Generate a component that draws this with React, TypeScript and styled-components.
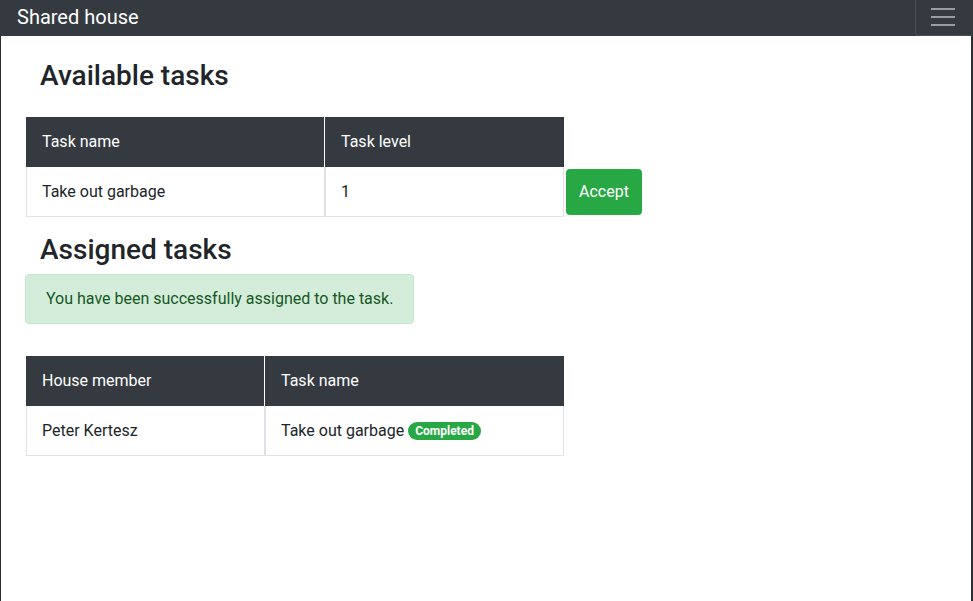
import React from "react";
import styled, { createGlobalStyle } from "styled-components";

const Global = createGlobalStyle`
  html, body { margin: 0; padding: 0; background: #fff; }
  body { font-family: Roboto, "Liberation Sans", sans-serif; color: #212529; font-size: 16px; }
  * { box-sizing: border-box; }
`;

const Page = styled.div`
  width: 973px;
  height: 601px;
  display: flex;
  flex-direction: column;
  overflow: hidden;
`;

const Navbar = styled.nav`
  height: 36px;
  background: #343a40;
  display: flex;
  align-items: center;
  justify-content: space-between;
  padding-left: 17px;
  flex-shrink: 0;
`;

const Brand = styled.span`
  color: #fff;
  font-size: 20px;
  line-height: 24px;
  margin-top: -3px;
`;

const Toggler = styled.button`
  width: 57px;
  height: 36px;
  margin-right: 1px;
  background: transparent;
  border: 1px solid rgba(255, 255, 255, 0.1);
  border-top: none;
  border-right: none;
  border-radius: 0 0 0 4px;
  display: flex;
  flex-direction: column;
  align-items: center;
  justify-content: center;
  gap: 6px;
  padding: 0 2px 2px 0;
`;

const Bar = styled.span`
  display: block;
  width: 24px;
  height: 2px;
  background: rgba(255, 255, 255, 0.5);
`;

const Content = styled.main`
  flex: 1;
  border-left: 1px solid #2b2f33;
  border-right: 2px solid #2b2f33;
  padding: 23px 0 0 24px;
`;

const Heading = styled.h2<{ $top: number; $bottom: number }>`
  font-size: 28px;
  font-weight: 500;
  line-height: 34px;
  margin: ${(p) => p.$top}px 0 ${(p) => p.$bottom}px 15px;
  color: #212529;
`;

const Table = styled.table`
  border-collapse: separate;
  border-spacing: 0;
  margin-left: 1px;
`;

const Th = styled.th<{ $w: number; $divider?: boolean }>`
  width: ${(p) => p.$w}px;
  height: 50px;
  background: #343a40;
  color: #fff;
  font-weight: 400;
  text-align: left;
  padding: 0 0 2px 16px;
  font-size: 16px;
  border-right: ${(p) => (p.$divider ? "1px solid #fff" : "none")};
`;

const EmptyTh = styled.th`
  background: transparent;
  padding: 0;
`;

const Td = styled.td`
  height: 50px;
  padding: 0 0 1px 15px;
  border: 1px solid #dee2e6;
  border-top: none;
  font-size: 16px;
  color: #212529;
  vertical-align: middle;
`;

const ButtonCell = styled.td`
  padding: 0 0 0 2px;
  vertical-align: middle;
`;

const AcceptButton = styled.button`
  width: 76px;
  height: 46px;
  background: #28a745;
  color: #fff;
  border: none;
  border-radius: 4px;
  font-family: Roboto, "Liberation Sans", sans-serif;
  font-size: 16px;
  padding: 0 0 2px 0;
`;

const Alert = styled.div`
  width: 389px;
  height: 50px;
  background: #d4edda;
  border: 1px solid #c3e6cb;
  border-radius: 4px;
  color: #155724;
  display: flex;
  align-items: center;
  padding: 0 0 2px 20px;
  margin-bottom: 32px;
`;

const Badge = styled.span`
  display: inline-block;
  background: #28a745;
  color: #fff;
  font-size: 12px;
  font-weight: 700;
  line-height: 12px;
  padding: 3px 7px 3px 7px;
  border-radius: 10px;
  margin-left: 4px;
  vertical-align: 1px;
`;

export default function App() {
  return (
    <Page>
      <Global />
      <Navbar>
        <Brand>Shared house</Brand>
        <Toggler aria-label="Toggle navigation">
          <Bar />
          <Bar />
          <Bar />
        </Toggler>
      </Navbar>
      <Content>
        <Heading $top={0} $bottom={24}>Available tasks</Heading>
        <Table>
          <thead>
            <tr>
              <Th $w={299} $divider>Task name</Th>
              <Th $w={239}>Task level</Th>
              <EmptyTh />
            </tr>
          </thead>
          <tbody>
            <tr>
              <Td>Take out garbage</Td>
              <Td>1</Td>
              <ButtonCell>
                <AcceptButton>Accept</AcceptButton>
              </ButtonCell>
            </tr>
          </tbody>
        </Table>
        <Heading $top={16} $bottom={7}>Assigned tasks</Heading>
        <Alert>You have been successfully assigned to the task.</Alert>
        <Table>
          <thead>
            <tr>
              <Th $w={239} $divider>House member</Th>
              <Th $w={299}>Task name</Th>
            </tr>
          </thead>
          <tbody>
            <tr>
              <Td>Peter Kertesz</Td>
              <Td>
                Take out garbage<Badge>Completed</Badge>
              </Td>
            </tr>
          </tbody>
        </Table>
      </Content>
    </Page>
  );
}
